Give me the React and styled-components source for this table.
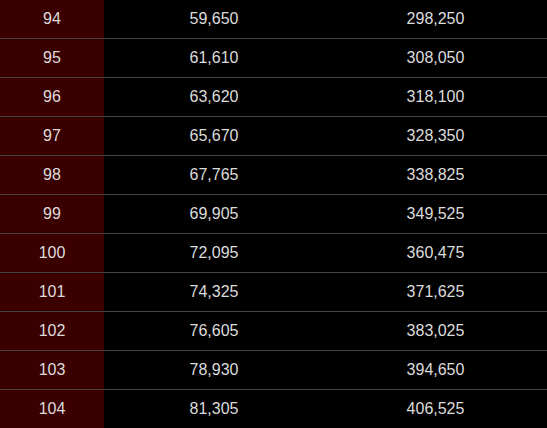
import React from "react";
import styled, { createGlobalStyle } from "styled-components";

const Global = createGlobalStyle`
  html, body { margin: 0; padding: 0; background: #000; }
  body { font-family: "Liberation Sans", Arial, sans-serif; overflow: hidden; }
`;

const Table = styled.div`
  display: grid;
  grid-template-columns: 104px 220px 1fr;
  width: 547px;
`;

const Cell = styled.div`
  height: 38px;
  border-bottom: 1px solid #444;
  display: flex;
  align-items: center;
  justify-content: center;
  font-size: 16px;
  color: #dcdcdc;
  background: ${(p) => (p.$level ? "#3a0000" : "#000")};
`;

const rows = [
  [94, "59,650", "298,250"],
  [95, "61,610", "308,050"],
  [96, "63,620", "318,100"],
  [97, "65,670", "328,350"],
  [98, "67,765", "338,825"],
  [99, "69,905", "349,525"],
  [100, "72,095", "360,475"],
  [101, "74,325", "371,625"],
  [102, "76,605", "383,025"],
  [103, "78,930", "394,650"],
  [104, "81,305", "406,525"],
];

export default function App() {
  return (
    <>
      <Global />
      <Table>
        {rows.map(([lvl, a, b]) => (
          <React.Fragment key={lvl}>
            <Cell $level>{lvl}</Cell>
            <Cell>{a}</Cell>
            <Cell>{b}</Cell>
          </React.Fragment>
        ))}
      </Table>
    </>
  );
}
